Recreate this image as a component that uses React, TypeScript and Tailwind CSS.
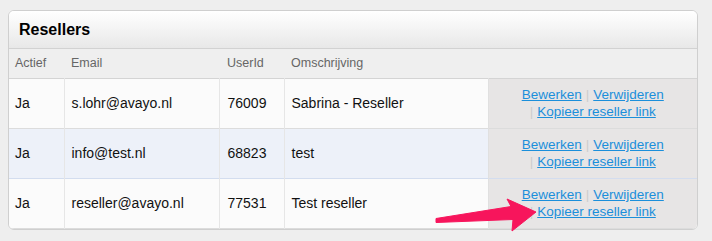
import { Fragment } from 'react';

type Reseller = {
  active: string;
  email: string;
  userId: string;
  description: string;
};

const resellers: Reseller[] = [
  { active: 'Ja', email: 's.lohr@avayo.nl', userId: '76009', description: 'Sabrina - Reseller' },
  { active: 'Ja', email: 'info@test.nl', userId: '68823', description: 'test' },
  { active: 'Ja', email: 'reseller@avayo.nl', userId: '77531', description: 'Test reseller' },
];

function ActionLinks() {
  return (
    <div className="flex flex-col items-center leading-[17px] text-[13.5px]">
      <div>
        <a href="#" className="text-[#1b8fdb] underline underline-offset-1">Bewerken</a>
        <span className="text-[#cccccc] mx-[4px]">|</span>
        <a href="#" className="text-[#1b8fdb] underline underline-offset-1">Verwijderen</a>
      </div>
      <div>
        <span className="text-[#cccccc] mr-[4px]">|</span>
        <a href="#" className="text-[#1b8fdb] underline underline-offset-1">Kopieer reseller link</a>
      </div>
    </div>
  );
}

function Arrow() {
  return (
    <svg className="absolute left-0 top-0 pointer-events-none" width="712" height="241">
      <polygon
        points="436,218.5 511,206.5 507,199 536,212 512,231 513,219.5 436,222.5"
        fill="#f7155c"
        stroke="#f7155c"
        strokeWidth="1"
        strokeLinejoin="round"
      />
    </svg>
  );
}

export default function App() {
  return (
    <div className="relative w-[712px] h-[241px] bg-[#eeeeee] pt-[10px] pl-[8px] font-['Liberation_Sans',Arial,sans-serif]">
      <div className="w-[690px] border border-[#cfcfcf] rounded-[6px] overflow-hidden bg-[#fafafa]">
        <div className="h-[38px] flex items-center pl-[10px] bg-gradient-to-b from-[#ffffff] to-[#e8e8e8] border-b border-[#d2d2d2]">
          <h2 className="text-[16px] font-bold text-black">Resellers</h2>
        </div>
        <table className="w-[688px] table-fixed border-collapse text-[14px] text-[#111111]">
          <colgroup>
            <col className="w-[55px]" />
            <col className="w-[155px]" />
            <col className="w-[65px]" />
            <col className="w-[204px]" />
            <col className="w-[209px]" />
          </colgroup>
          <thead>
            <tr className="h-[29px] bg-[#efefef] border-b border-[#d4d4d4] text-[12.5px] text-[#666666]">
              <th className="text-left font-normal pl-[6px]">Actief</th>
              <th className="text-left font-normal pl-[7px]">Email</th>
              <th className="text-left font-normal pl-[8px]">UserId</th>
              <th className="text-left font-normal pl-[7px]">Omschrijving</th>
              <th></th>
            </tr>
          </thead>
          <tbody>
            {resellers.map((r, i) => {
              const alt = i === 1;
              return (
                <Fragment key={r.userId}>
                  <tr
                    className={
                      alt
                        ? 'h-[50px] bg-[#edf1f9] border-y border-[#d3ddef]'
                        : 'h-[50px] bg-[#fbfbfb] border-b border-[#dcdcdc]'
                    }
                  >
                    <td className="pl-[6px] border-r border-[#e6e6e6]">{r.active}</td>
                    <td className="pl-[7px] border-r border-[#e6e6e6]">{r.email}</td>
                    <td className="pl-[8px] border-r border-[#e6e6e6]">{r.userId}</td>
                    <td className="pl-[7px]">{r.description}</td>
                    <td className="bg-[#e7e5e5] border-l border-[#e0e0e0]">
                      <ActionLinks />
                    </td>
                  </tr>
                </Fragment>
              );
            })}
          </tbody>
        </table>
      </div>
      <Arrow />
    </div>
  );
}
